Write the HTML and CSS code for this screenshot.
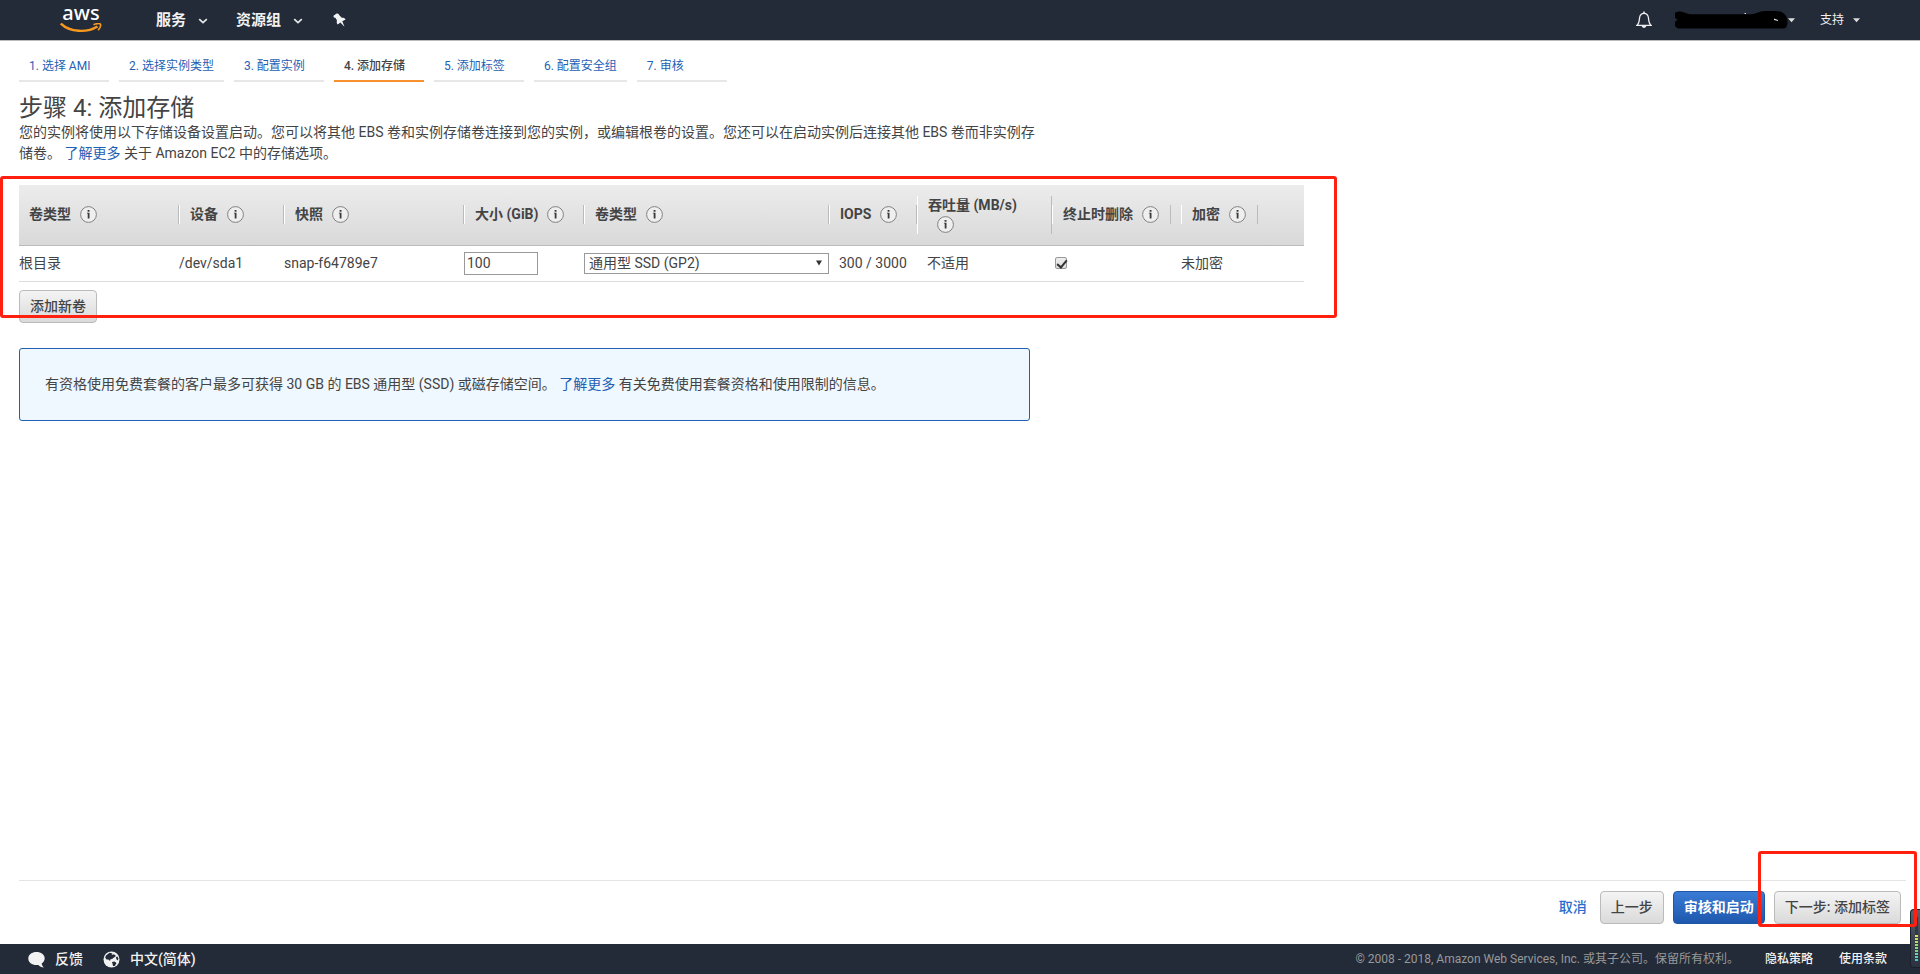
FILE: index.html
```html
<!DOCTYPE html>
<html lang="zh-CN">
<head>
<meta charset="utf-8">
<title>步骤 4: 添加存储</title>
<link rel="stylesheet" href="styles.css">
</head>
<body>
<svg class="defs" aria-hidden="true">
  <symbol id="info" viewBox="0 0 17 17">
    <circle cx="8.500" cy="8.500" r="7.900" fill="#efefef" stroke="#808080" stroke-width="1"/>
    <path d="M6.900 6.800h2.600v5.700h-1.800v-4.900h-.8zM7.600 3.900h1.900v1.800h-1.900z" fill="#3a3a3a"/>
  </symbol>
  <symbol id="chevron" viewBox="0 0 10 6">
    <path d="M1.200 1.200L5 4.600L8.800 1.200" fill="none" stroke="#e4e6e8" stroke-width="1.800"/>
  </symbol>
  <symbol id="caret" viewBox="0 0 8 5">
    <path d="M0 0h8L4 4.500z" fill="#ddd"/>
  </symbol>
</svg>

<header class="topbar">
  <a class="logo" href="#" aria-label="aws"><span class="logo-text">aws</span>
    <svg class="smile" viewBox="0 0 42 10"><path d="M.8.500C10 9.500 27 10 37.500 3.500" fill="none" stroke="#f7981f" stroke-width="2.400"/><path d="M33.500 1.800C36 .4 39.500.2 40.500 1.200C41.200 2.600 39.500 6 38 7.200" fill="none" stroke="#f7981f" stroke-width="1.600"/></svg>
  </a>
  <nav class="menus">
    <button class="menu" type="button">服务<svg class="chevron"><use href="#chevron"/></svg></button>
    <button class="menu" type="button">资源组<svg class="chevron"><use href="#chevron"/></svg></button>
    <button class="pin" type="button" aria-label="固定"><svg viewBox="0 0 13 15"><path d="M3.600.500C4.800.100 6 1 6.300 2.200L8.800 4.800C10.500 4.600 12 5.200 12.600 6.500L9.300 8.300L11.500 13.800L7.300 9.600L4.800 11.600C3.600 10.600 3.500 9 4 7.600L2.400 4.800C1 4.800.300 3.800.500 2.700Z" fill="#f2f3f3"/></svg></button>
  </nav>
  <div class="account">
    <button class="bell" type="button" aria-label="通知"><svg viewBox="0 0 16 18"><path d="M1 14.300C3.300 12.600 3.200 10 3.600 6.500C4 3.800 5.500 2.300 8 2.300S12 3.800 12.400 6.500C12.800 10 12.700 12.600 15 14.300Z" fill="none" stroke="#eee" stroke-width="1.300"/><path d="M5.600 14.500h4.800c-.2 3.200-4.600 3.200-4.800 0zM7.200.5h1.600v2H7.200z" fill="#eee"/></svg></button>
    <button class="user" type="button" aria-label="账户"><svg class="scribble" viewBox="0 0 113 18"><path d="M3.500 4.500C7 3.500 10 7.500 17 7.300H76C82 7.300 84 4 90 4H101C107 4 109 8 108.500 12H5C4 12 3.500 13 4 13.500H108" fill="none" stroke="#000" stroke-width="8" stroke-linecap="round" stroke-linejoin="round"/><path d="M99 7.500l4 1.500v1l-4-1z" fill="#ddd"/><path d="M69.500 2h1.500v1h-1.500z" fill="#ddd"/></svg><svg class="caret"><use href="#caret"/></svg></button>
    <button class="support" type="button">支持<svg class="caret"><use href="#caret"/></svg></button>
  </div>
</header>

<main class="page">
  <nav class="steps">
    <a href="#">1. 选择 AMI</a>
    <a href="#">2. 选择实例类型</a>
    <a href="#">3. 配置实例</a>
    <a class="current" href="#" aria-current="step">4. 添加存储</a>
    <a href="#">5. 添加标签</a>
    <a href="#">6. 配置安全组</a>
    <a href="#">7. 审核</a>
  </nav>
  <h1>步骤 4: 添加存储</h1>
  <p class="intro">您的实例将使用以下存储设备设置启动。您可以将其他 EBS 卷和实例存储卷连接到您的实例，或编辑根卷的设置。您还可以在启动实例后连接其他 EBS 卷而非实例存储卷。 <a href="#">了解更多</a> 关于 Amazon EC2 中的存储选项。</p>

  <table class="volumes">
    <colgroup><col class="c-kind"><col class="c-device"><col class="c-snap"><col class="c-size"><col class="c-type"><col class="c-iops"><col class="c-rate"><col class="c-delete"><col class="c-crypt"></colgroup>
    <thead>
      <tr>
        <th><div class="first">卷类型<svg class="info"><use href="#info"/></svg></div></th>
        <th><div>设备<svg class="info"><use href="#info"/></svg></div></th>
        <th><div>快照<svg class="info"><use href="#info"/></svg></div></th>
        <th><div>大小 (GiB)<svg class="info"><use href="#info"/></svg></div></th>
        <th><div>卷类型<svg class="info"><use href="#info"/></svg></div></th>
        <th><div>IOPS<svg class="info"><use href="#info"/></svg></div></th>
        <th><div>吞吐量 (MB/s)<br><svg class="info"><use href="#info"/></svg></div></th>
        <th><div class="fit">终止时删除<svg class="info"><use href="#info"/></svg></div></th>
        <th><div class="fit">加密<svg class="info"><use href="#info"/></svg></div></th>
      </tr>
    </thead>
    <tbody>
      <tr>
        <td>根目录</td>
        <td>/dev/sda1</td>
        <td>snap-f64789e7</td>
        <td><input class="size" type="text" value="100" aria-label="大小 (GiB)"></td>
        <td><div class="select"><select aria-label="卷类型"><option>通用型 SSD (GP2)</option></select><svg viewBox="0 0 7 6"><path d="M0 0h7L3.500 6z" fill="#333"/></svg></div></td>
        <td class="inset">300 / 3000</td>
        <td class="inset">不适用</td>
        <td><input class="check" type="checkbox" checked aria-label="终止时删除"></td>
        <td>未加密</td>
      </tr>
    </tbody>
  </table>
  <button class="btn add" type="button">添加新卷</button>

  <div class="notice">有资格使用免费套餐的客户最多可获得 30 GB 的 EBS 通用型 (SSD) 或磁存储空间。 <a href="#">了解更多</a> 有关免费使用套餐资格和使用限制的信息。</div>
</main>

<div class="actions">
  <a class="cancel" href="#">取消</a>
  <button class="btn" type="button">上一步</button>
  <button class="btn primary" type="button">审核和启动</button>
  <button class="btn next" type="button">下一步: 添加标签</button>
</div>

<footer class="footer">
  <a class="foot-main" href="#"><svg viewBox="0 0 17 17"><path d="M8.500 1C13 1 16.700 3.500 16.700 7.300C16.700 9.500 15.500 11.400 13.700 12.600C13.800 14 14.500 15.300 15.800 16.500C13.500 16.400 11.600 15.400 10.400 13.900C5 14.800.300 12 .300 7.500C.300 3.500 4 1 8.500 1Z" fill="#f2f2f2"/></svg>反馈</a>
  <a class="foot-main" href="#"><svg viewBox="0 0 17 17"><circle cx="8.500" cy="8.500" r="8" fill="#f2f2f2"/><path d="M3 4.500L6.500 1.800L9.500 2.400L8.500 4L11 3.300L13 5L11 6.500L9 8L7.500 8.200L7 10L5.500 8.500L3.500 8.500L2.200 6.500ZM9 11L11.500 10.600L13.500 12L11.800 15L10 15L9.600 13ZM13 6L14.500 5.500L15.500 8L14.500 9.500L13.300 8Z" fill="#232b38"/></svg>中文(简体)</a>
  <span class="copyright">© 2008 - 2018, Amazon Web Services, Inc. 或其子公司。保留所有权利。</span>
  <a href="#">隐私策略</a>
  <a href="#">使用条款</a>
</footer>

<div class="meter"><div class="meter-bars"></div></div>
<div class="mark mark-table"></div>
<div class="mark mark-next"></div>
</body>
</html>
```
FILE: styles.css
```css
* { box-sizing: border-box; }

body {
  position: relative;
  display: flex;
  flex-direction: column;
  min-height: 100vh;
  margin: 0;
  background: #fff;
  color: #444;
  font: 14px/21px Roboto, "Noto Sans CJK SC", sans-serif;
}

a { color: #1f5fb4; text-decoration: none; }
button, input, select { margin: 0; font: inherit; color: inherit; }
svg { display: block; flex: none; }
.defs { position: absolute; width: 0; height: 0; }

.topbar {
  display: flex;
  align-items: center;
  height: 41px;
  padding: 0 60px;
  background: #232b38;
  border-bottom: 1px solid #bbb;
}
.topbar button {
  display: flex;
  align-items: center;
  padding: 0;
  border: 0;
  background: none;
  color: #f2f2f2;
}
.logo { width: 42px; height: 26px; }
.logo-text {
  display: block;
  margin-bottom: 4px;
  color: #fff;
  font: 500 20px/12px "Noto Sans", sans-serif;
  text-align: center;
}
.smile { width: 42px; height: 10px; }
.menus { display: flex; align-items: center; margin-left: 54px; }
.topbar .menu { margin-right: 28px; gap: 12px; font-size: 15px; font-weight: 700; }
.chevron { width: 10px; height: 6px; margin-top: 2px; }
.pin svg { width: 13px; height: 15px; margin-left: 2px; }
.account { display: flex; align-items: center; margin-left: auto; }
.bell svg { width: 16px; height: 18px; }
.topbar .user { margin-left: 23px; }
.scribble { width: 113px; height: 18px; }
.caret { width: 7px; height: 5px; }
.topbar .support { margin-left: 25px; gap: 9px; font-size: 12px; }

.page { flex: 1; padding: 13px 14px 0 19px; }
.steps { display: flex; gap: 10px; font-size: 12px; line-height: 24px; }
.steps a {
  min-width: 90px;
  padding: 0 10px 2px;
  border-bottom: 2px solid #e7e7e7;
}
.steps .current { color: #444; font-weight: 500; border-color: #f7912d; }

h1 { margin: 13px 0 0; font-size: 24px; font-weight: 400; line-height: 27px; }
.intro { max-width: 1021px; margin: 0; }

.volumes { width: 1285px; margin-top: 21px; border-collapse: collapse; table-layout: fixed; }
.c-kind { width: 160px; }
.c-device { width: 105px; }
.c-snap { width: 180px; }
.c-size { width: 120px; }
.c-type { width: 245px; }
.c-iops { width: 88px; }
.c-rate { width: 135px; }
.c-delete { width: 129px; }
.volumes thead { background: linear-gradient(#ececec, #d9d9d9); }
.volumes th {
  height: 60px;
  padding: 0;
  border-bottom: 1px solid #bbb;
  text-align: left;
  font-weight: 700;
  line-height: 19px;
}
.volumes th div {
  padding-left: 10px;
  border-left: 1px solid #fff;
  border-right: 1px solid #bbb;
  white-space: nowrap;
}
.volumes th .first { border-left: 0; }
.volumes th .fit { width: max-content; padding-right: 11px; }
.info { display: inline-block; width: 17px; height: 17px; margin-left: 9px; vertical-align: -4px; }
.volumes td { height: 36px; padding: 0; border-bottom: 1px solid #ddd; }
.volumes .inset { padding-left: 10px; }
.size {
  display: block;
  width: 74px;
  height: 23px;
  padding: 0 2px;
  border: 1px solid #999;
}
.select { position: relative; }
.select select {
  display: block;
  width: 100%;
  height: 21px;
  padding: 0 4px;
  border: 1px solid #999;
  border-radius: 0;
  background: #fff;
  appearance: none;
  line-height: 19px;
}
.select svg { position: absolute; top: 7px; right: 7px; width: 6px; height: 6px; }
.check {
  display: block;
  position: relative;
  width: 12px;
  height: 12px;
  margin-left: 3px;
  border: 1px solid #999;
  border-radius: 2px;
  background: linear-gradient(#eee, #ddd);
  appearance: none;
}
.check:checked::after {
  content: "";
  position: absolute;
  top: 0;
  left: 3px;
  width: 4px;
  height: 8px;
  border: solid #333;
  border-width: 0 2px 2px 0;
  transform: rotate(40deg);
}

.btn {
  height: 33px;
  padding: 0 10px;
  border: 1px solid #bbb;
  border-radius: 4px;
  background: linear-gradient(#f4f4f4, #dadada);
  font-weight: 500;
  white-space: nowrap;
}
.add { display: block; margin-top: 8px; }
.primary {
  border-color: #1f57a6;
  background: linear-gradient(#3a7bd5, #1e58ae);
  color: #fff;
  font-weight: 700;
}

.notice {
  max-width: 1011px;
  margin-top: 25px;
  padding: 25px;
  border: 1px solid #1f5fb4;
  border-radius: 3px;
  background: #eff7ff;
}

.actions {
  display: flex;
  align-items: center;
  justify-content: flex-end;
  gap: 9px;
  height: 64px;
  margin: 0 14px 0 19px;
  padding: 10px 5px 20px 0;
  border-top: 1px solid #e4e4e4;
}
.cancel { margin-right: 4px; color: #2a6bce; font-weight: 500; }

.footer {
  display: flex;
  align-items: center;
  height: 30px;
  padding: 0 33px 0 28px;
  background: #232b38;
  font-size: 12px;
}
.footer a { margin-left: 26px; color: #f2f2f2; font-weight: 500; }
.footer .foot-main {
  display: flex;
  align-items: center;
  gap: 10px;
  margin: 0 20px 0 0;
  font-size: 14px;
}
.foot-main svg { width: 17px; height: 17px; }
.copyright { margin-left: auto; color: #999; }

.mark { position: absolute; border: 3px solid #ff2010; border-radius: 3px; pointer-events: none; }
.mark-table { top: 176px; left: 0; width: 1337px; height: 142px; }
.mark-next { right: 3px; bottom: 47px; width: 159px; height: 76px; }
.meter {
  position: absolute;
  right: 0;
  bottom: 6px;
  width: 10px;
  height: 59px;
  padding: 7px 2px 6px 4px;
  border: 1px solid #1a202b;
  border-right: 0;
  border-radius: 4px 0 0 4px;
  background: linear-gradient(#5a6270, #3c4452 50%, #2b3342);
}
.meter-bars {
  height: 100%;
  background:
    repeating-linear-gradient(transparent 0 2px, #303846 2px 3px),
    linear-gradient(#303846 40%, #f1e052 40%, #9fd86b 65%, #39d0c8);
}
```
